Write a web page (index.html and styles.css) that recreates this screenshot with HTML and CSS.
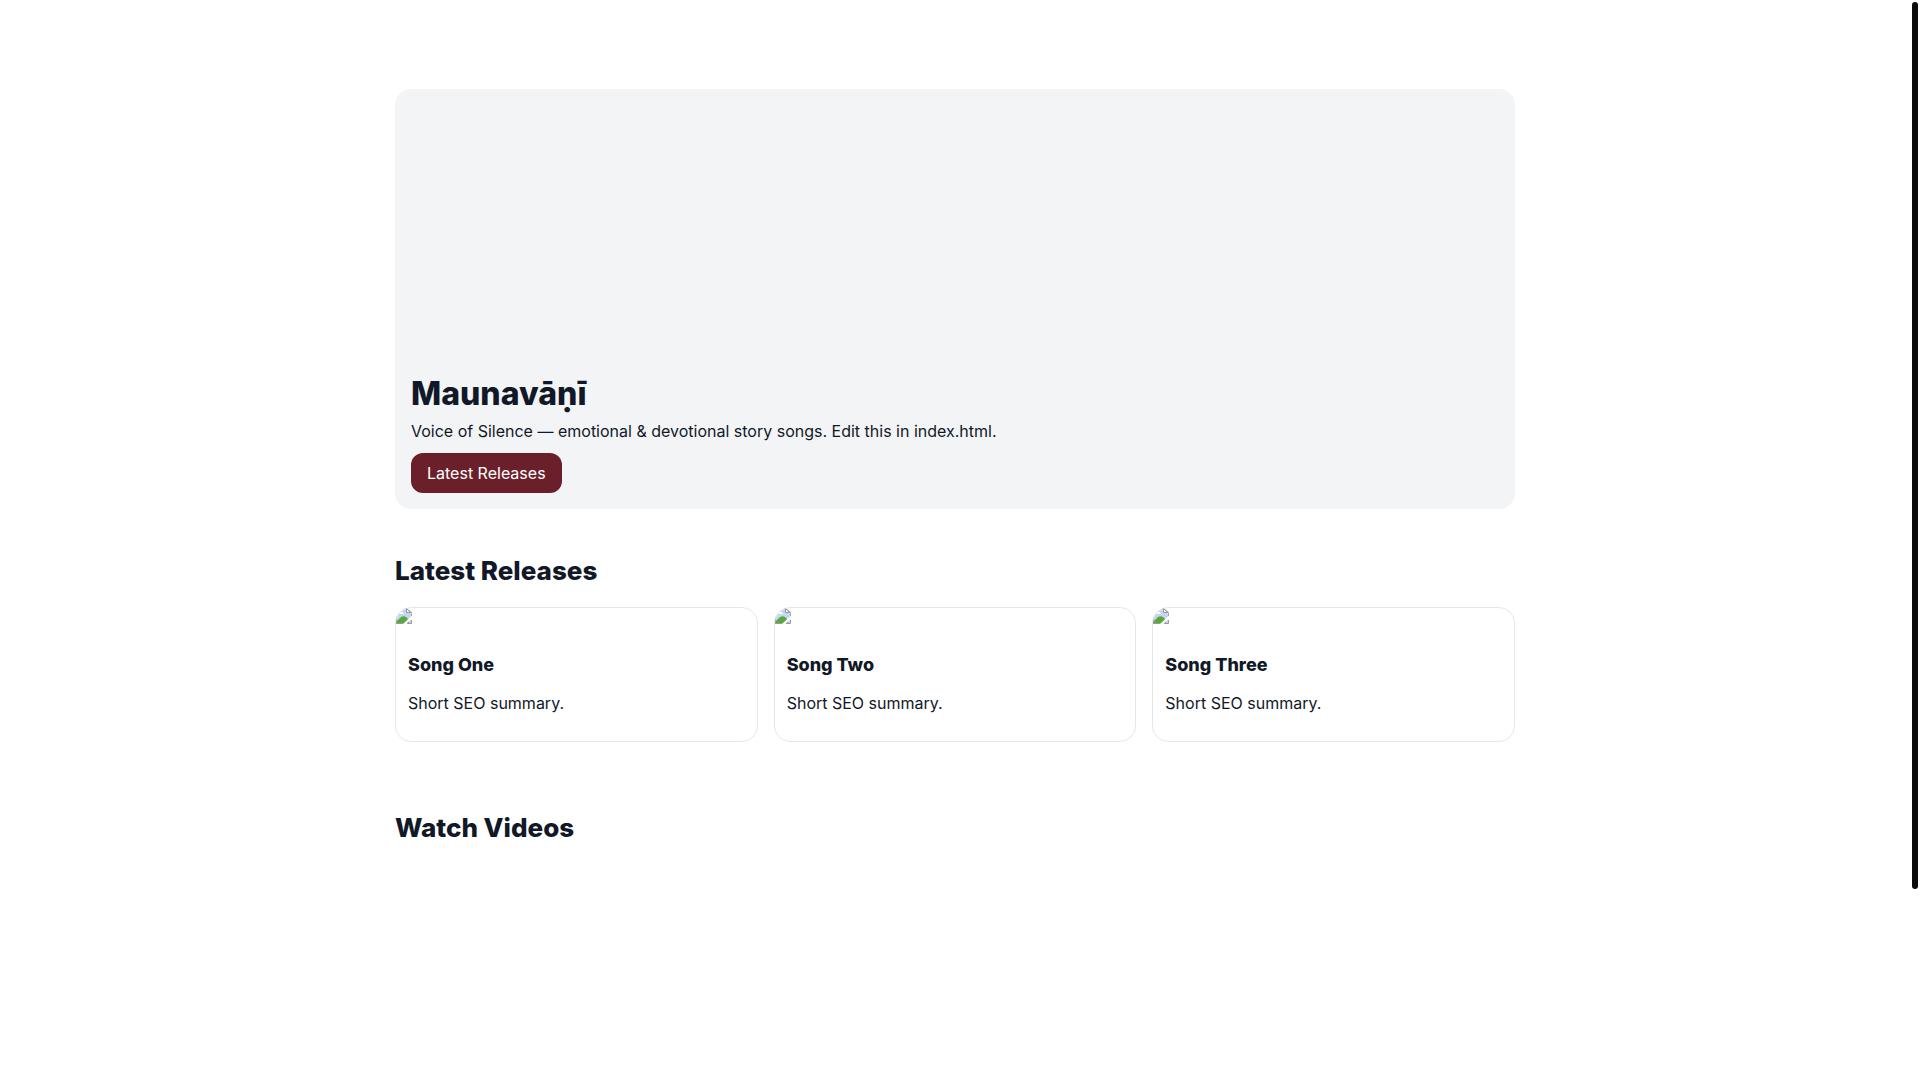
FILE: index.html
```html
<!DOCTYPE html>
<html lang="en">
<head>
<meta charset="utf-8">
<meta name="viewport" content="width=device-width, initial-scale=1">
<title>Maunavāṇī</title>
<link rel="stylesheet" href="styles.css">
</head>
<body>
<svg class="defs" aria-hidden="true">
  <symbol id="missing" viewBox="0 0 16 16">
    <path fill="#c5d5f4" d="M1 1h9l5 5v9H1z"/>
    <path fill="#fff" d="M3 6V5h1V4h3v1h1v1z"/>
    <path fill="#58a93a" d="M1 15v-2l4-4q2.500-1.500 5 0l3 3v3z"/>
    <path fill="#fff" stroke="#999" d="M10.500.5v4h5z"/>
    <path fill="none" stroke="#999" d="M.5 16V.5h10l5 5V9M0 15.500h8M11 15.500h4.500V12"/>
    <path fill="#fff" d="M16 7.500v3L10.500 16H7z"/>
  </symbol>
</svg>
<main class="page">
  <section class="hero">
    <h1 class="hero-title">Maunavāṇī</h1>
    <p class="hero-text">Voice of Silence — emotional &amp; devotional story songs. Edit this in index.html.</p>
    <a class="button" href="#releases">Latest Releases</a>
  </section>
  <section class="section" id="releases">
    <h2 class="section-title">Latest Releases</h2>
    <div class="cards">
      <article class="card">
        <svg class="cover" aria-hidden="true"><use href="#missing"/></svg>
        <div class="card-body"><h3 class="card-title">Song One</h3><p class="card-text">Short SEO summary.</p></div>
      </article>
      <article class="card">
        <svg class="cover" aria-hidden="true"><use href="#missing"/></svg>
        <div class="card-body"><h3 class="card-title">Song Two</h3><p class="card-text">Short SEO summary.</p></div>
      </article>
      <article class="card">
        <svg class="cover" aria-hidden="true"><use href="#missing"/></svg>
        <div class="card-body"><h3 class="card-title">Song Three</h3><p class="card-text">Short SEO summary.</p></div>
      </article>
    </div>
  </section>
  <section class="section">
    <h2 class="section-title">Watch Videos</h2>
  </section>
</main>
<div class="scroll-thumb" aria-hidden="true"></div>
</body>
</html>
```
FILE: styles.css
```css
* { box-sizing: border-box; }

body {
  margin: 0;
  padding-right: 10px;
  background: #fff;
  color: #111827;
  font: 400 16px/24px Inter, sans-serif;
}

h1, h2, h3, p { margin: 0; }

.defs { display: none; }

.page {
  max-width: 1152px;
  margin: 0 auto;
  padding: 89px 16px 32px;
}

.hero {
  display: flex;
  flex-direction: column;
  justify-content: flex-end;
  align-items: flex-start;
  min-height: 420px;
  padding: 16px;
  border-radius: 16px;
  background: #f3f4f6;
}

.hero-title { font-size: 32px; line-height: 46px; font-weight: 800; }

.hero-text { margin-bottom: 8px; line-height: 28px; }

.button {
  padding: 8px 16px;
  border-radius: 12px;
  background: #6b1f2b;
  color: #fff;
  text-decoration: none;
}

.section { padding: 40px 0 48px; }

.section + .section { padding-top: 16px; }

.section-title {
  margin-bottom: 14px;
  font-size: 26px;
  line-height: 44px;
  font-weight: 800;
}

.cards {
  display: grid;
  grid-template-columns: repeat(3, 1fr);
  gap: 16px;
}

.card {
  overflow: hidden;
  border: 1px solid #e5e7eb;
  border-radius: 16px;
}

.cover { display: block; width: 16px; height: 16px; }

.card-body { padding: 27px 12px 26px; }

.card-title {
  margin-bottom: 12px;
  font-size: 18px;
  line-height: 28px;
  font-weight: 800;
}

.scroll-thumb {
  position: fixed;
  top: 2px;
  right: 2px;
  width: 6px;
  height: 82.1vh;
  border-radius: 3px;
  background: #0b0b0b;
}
```
